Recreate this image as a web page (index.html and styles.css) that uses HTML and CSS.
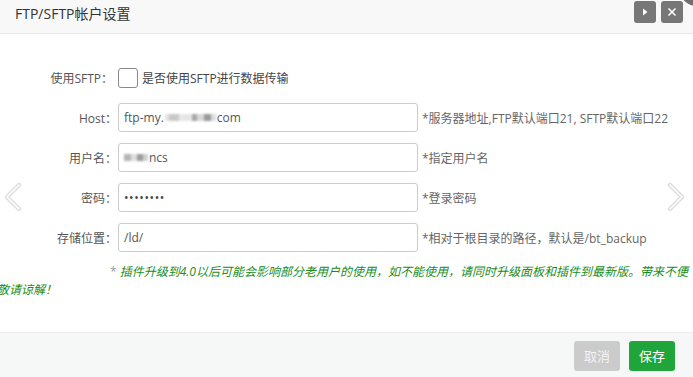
FILE: index.html
```html
<!DOCTYPE html>
<html lang="zh-CN">
<head>
<meta charset="utf-8">
<title>FTP/SFTP帐户设置</title>
<link rel="stylesheet" href="styles.css">
</head>
<body>
<div class="dialog">
  <div class="titlebar">
    <span class="title">FTP/SFTP帐户设置</span>
    <div class="tools">
      <span class="tool-btn"><svg width="8" height="10" viewBox="0 0 8 10"><path d="M2 1.5 L6.5 5 L2 8.5 Z" fill="#fff"/></svg></span>
      <span class="tool-btn"><svg width="10" height="10" viewBox="0 0 10 10"><path d="M1.5 1.5 L8.5 8.5 M8.5 1.5 L1.5 8.5" stroke="#fff" stroke-width="1.6"/></svg></span>
    </div>
    <span class="corner-close"></span>
  </div>

  <div class="content">
    <svg class="nav nav-left" width="22" height="30" viewBox="0 0 22 30">
      <path d="M17 3 L5 15 L17 27" fill="none" stroke="#dedede" stroke-width="4.5" stroke-linecap="round" stroke-linejoin="round"/>
      <path d="M17 3 L5 15 L17 27" fill="none" stroke="#fff" stroke-width="1.6" stroke-linecap="round" stroke-linejoin="round"/>
    </svg>
    <svg class="nav nav-right" width="22" height="30" viewBox="0 0 22 30">
      <path d="M5 3 L17 15 L5 27" fill="none" stroke="#dedede" stroke-width="4.5" stroke-linecap="round" stroke-linejoin="round"/>
      <path d="M5 3 L17 15 L5 27" fill="none" stroke="#fff" stroke-width="1.6" stroke-linecap="round" stroke-linejoin="round"/>
    </svg>

    <div class="row row-check">
      <span class="label label-check">使用SFTP：</span>
      <span class="checkbox"></span>
      <span class="check-text">是否使用SFTP进行数据传输</span>
    </div>

    <div class="row">
      <span class="label">Host：</span>
      <div class="field">ftp-my.<span class="blur blur-host"></span>com</div>
      <span class="hint">*服务器地址,FTP默认端口21, SFTP默认端口22</span>
    </div>

    <div class="row">
      <span class="label">用户名：</span>
      <div class="field"><span class="blur blur-user"></span>ncs</div>
      <span class="hint">*指定用户名</span>
    </div>

    <div class="row">
      <span class="label">密码：</span>
      <div class="field field-pass">••••••••</div>
      <span class="hint">*登录密码</span>
    </div>

    <div class="row">
      <span class="label">存储位置：</span>
      <div class="field">/ld/</div>
      <span class="hint">*相对于根目录的路径，默认是/bt_backup</span>
    </div>

    <div class="note"><span class="star">* </span><span class="green">插件升级到4.0以后可能会影响部分老用户的使用，如不能使用，请同时升级面板和插件到最新版。带来不便</span><br><span class="green">敬请谅解！</span></div>
  </div>

  <div class="footer">
    <span class="btn btn-cancel">取消</span>
    <span class="btn btn-save">保存</span>
  </div>
</div>
</body>
</html>
```
FILE: styles.css
```css
html, body {
  margin: 0;
  padding: 0;
  background: #fff;
}
body {
  width: 693px;
  height: 377px;
  overflow: hidden;
  font-family: "Open Sans", "Noto Sans CJK SC", sans-serif;
  font-size: 12px;
  color: #555;
}
.dialog {
  position: relative;
  width: 693px;
  height: 377px;
  display: flex;
  flex-direction: column;
  overflow: hidden;
}
.titlebar {
  position: relative;
  height: 33px;
  flex: 0 0 auto;
  background: #f8f8f8;
  border-bottom: 1px solid #e8e8e8;
  display: flex;
  align-items: flex-start;
  justify-content: space-between;
  padding-left: 15px;
}
.title {
  font-size: 14px;
  line-height: 27px;
  color: #333;
}
.tools {
  display: flex;
  gap: 5px;
  margin-top: 1px;
  margin-right: 10px;
}
.tool-btn {
  width: 22px;
  height: 22px;
  border-radius: 3px;
  background: #777;
  display: flex;
  align-items: center;
  justify-content: center;
}
.corner-close {
  position: absolute;
  left: 679px;
  top: -30px;
  width: 36px;
  height: 36px;
  border-radius: 50%;
  background: #6f6f6f;
}
.content {
  position: relative;
  flex: 1 1 auto;
  padding-top: 34px;
}
.nav {
  position: absolute;
  top: 148px;
}
.nav-left { left: 2px; }
.nav-right { left: 665px; }
.row {
  display: flex;
  align-items: center;
  height: 29px;
  margin-bottom: 11px;
}
.row-check {
  height: 20px;
  margin-bottom: 15px;
}
.label {
  width: 117px;
  flex: 0 0 auto;
  text-align: right;
  color: #555;
  margin-right: 1px;
  font-family: "Open Sans", "Noto Sans CJK SC", sans-serif;
}
.label-check {
  width: 113px;
  margin-right: 5px;
}
.checkbox {
  width: 18px;
  height: 18px;
  border: 1px solid #888;
  border-radius: 3px;
  background: #fff;
  box-sizing: content-box;
}
.check-text {
  margin-left: 4px;
  color: #444;
}
.field {
  width: 300px;
  height: 29px;
  box-sizing: border-box;
  border: 1px solid #ccc;
  border-radius: 3px;
  padding-left: 5px;
  line-height: 27px;
  color: #555;
  white-space: nowrap;
  display: flex;
  align-items: center;
}
.field-pass {
  letter-spacing: 0.6px;
  font-size: 12px;
  color: #444;
}
.blur {
  display: inline-block;
  height: 7px;
  filter: blur(0.8px);
}
.blur-host {
  width: 51px;
  margin: 0 1px 0 1px;
  background: linear-gradient(90deg, #e4e4e4 0 8%, #c9c9c9 8% 28%, #e6e6e6 28% 52%, #a8a8a8 52% 62%, #d8d8d8 62% 76%, #9a9a9a 76% 90%, #dcdcdc 90% 100%);
}
.blur-user {
  width: 24px;
  margin-right: 1px;
  background: linear-gradient(90deg, #b5b5b5 0 30%, #e0e0e0 30% 55%, #9c9c9c 55% 80%, #cfcfcf 80% 100%);
}
.hint {
  margin-left: 4px;
  color: #666;
  white-space: nowrap;
}
.note {
  margin-top: 9px;
  margin-left: -3px;
  padding-left: 113px;
  line-height: 18px;
  white-space: nowrap;
  font-style: italic;
}
.note .green {
  color: #1a8c1a;
}
.note .green:last-child {
  margin-left: -113px;
}
.star {
  color: #999;
  font-style: normal;
}
.footer {
  flex: 0 0 auto;
  height: 45px;
  border-top: 1px solid #ececec;
  background: #f6f7f7;
  display: flex;
  justify-content: flex-end;
  align-items: flex-start;
  gap: 9px;
  padding-top: 8px;
  padding-right: 18px;
  box-sizing: border-box;
}
.btn {
  width: 46px;
  height: 30px;
  border-radius: 3px;
  line-height: 30px;
  text-align: center;
  font-size: 13px;
  color: #fff;
}
.btn-cancel {
  background: #cbcbcb;
  color: #f4f4f4;
}
.btn-save {
  background: #20a53a;
}
```
